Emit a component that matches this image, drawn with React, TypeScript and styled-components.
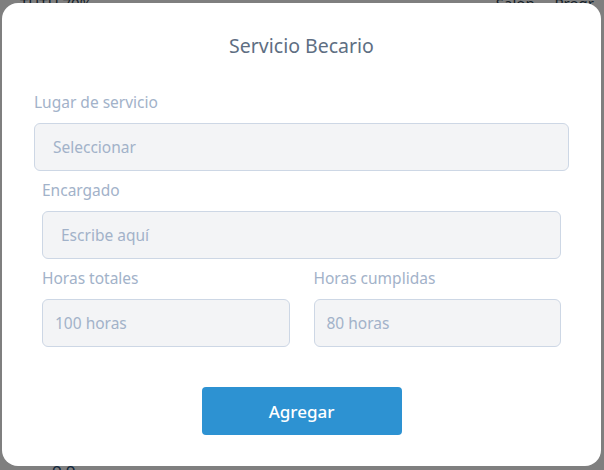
import React from "react";
import styled, { createGlobalStyle } from "styled-components";

const Global = createGlobalStyle`
  html, body { margin: 0; padding: 0; }
  body { font-family: "Noto Sans", "Open Sans", sans-serif; width: 604px; height: 470px; overflow: hidden; background: #fff; }
  * { box-sizing: border-box; }
`;

const Page = styled.div`
  position: relative;
  width: 604px;
  height: 470px;
  overflow: hidden;
  background: #ffffff;
  color: #2c3e50;
`;

const BgTop = styled.div`
  display: flex;
  justify-content: space-between;
  padding: 0 10px 0 20px;
  font-size: 15px;
  line-height: 14px;
  margin-top: -4px;
`;

const BgBottom = styled.div`
  position: absolute;
  left: 52px;
  bottom: -10px;
  font-size: 16px;
  color: #1f4e79;
`;

const Backdrop = styled.div`
  position: absolute;
  inset: 0;
  background: rgba(0, 0, 0, 0.5);
  padding: 3px 3px 4px 2px;
  display: flex;
`;

const Modal = styled.div`
  flex: 1;
  background: #ffffff;
  border-radius: 16px;
  padding: 26px 40px 0 40px;
  display: flex;
  flex-direction: column;
`;

const Title = styled.h2`
  margin: 0;
  text-align: center;
  font-size: 19.5px;
  font-weight: 400;
  color: #5e6e82;
  line-height: 34px;
`;

const Field = styled.div<{ $wide?: boolean }>`
  display: flex;
  flex-direction: column;
  margin: ${(p) => (p.$wide ? "0 -8px" : "0")};
`;

const Label = styled.label`
  font-size: 15.5px;
  color: #a2b2c9;
  line-height: 22px;
  margin-bottom: 10px;
`;

const Box = styled.div`
  height: 48px;
  background: #f3f4f6;
  border: 1px solid #cdd7e5;
  border-radius: 6px;
  display: flex;
  align-items: center;
  padding: 0 18px;
  font-size: 15.5px;
  color: #a2b2c9;
`;

const SmallBox = styled(Box)`
  padding: 0 12px;
`;

const Form = styled.div`
  display: flex;
  flex-direction: column;
  margin-top: 28px;
  gap: 8px;
`;

const Row = styled.div`
  display: grid;
  grid-template-columns: 1fr 1fr;
  gap: 24px;
`;

const Actions = styled.div`
  display: flex;
  justify-content: center;
  margin-top: 40px;
`;

const Button = styled.button`
  width: 200px;
  height: 48px;
  border: none;
  border-radius: 4px;
  background: #2d92d2;
  color: #ffffff;
  font-family: inherit;
  font-size: 17px;
  font-weight: 500;
`;

export default function App() {
  return (
    <>
      <Global />
      <Page>
        <BgTop>
          <span>TUTU 70%</span>
          <span>Salón ... Progr</span>
        </BgTop>
        <BgBottom>o o</BgBottom>
        <Backdrop>
          <Modal>
            <Title>Servicio Becario</Title>
            <Form>
              <Field $wide>
                <Label>Lugar de servicio</Label>
                <Box>Seleccionar</Box>
              </Field>
              <Field>
                <Label>Encargado</Label>
                <Box>Escribe aquí</Box>
              </Field>
              <Row>
                <Field>
                  <Label>Horas totales</Label>
                  <SmallBox>100 horas</SmallBox>
                </Field>
                <Field>
                  <Label>Horas cumplidas</Label>
                  <SmallBox>80 horas</SmallBox>
                </Field>
              </Row>
            </Form>
            <Actions>
              <Button>Agregar</Button>
            </Actions>
          </Modal>
        </Backdrop>
      </Page>
    </>
  );
}
